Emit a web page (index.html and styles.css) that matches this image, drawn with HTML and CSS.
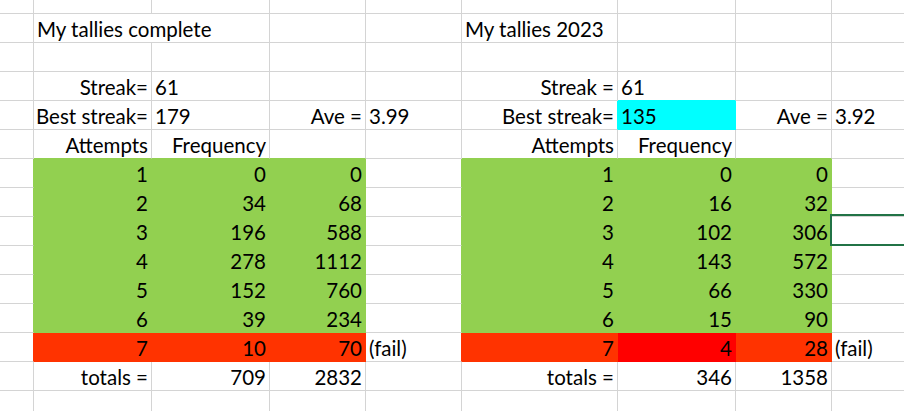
FILE: index.html
```html
<!DOCTYPE html>
<html>
<head>
<meta charset="utf-8">
<link rel="stylesheet" href="styles.css">
</head>
<body>
<div class="sheet">
  <!-- row 0 -->
  <div class="c"></div><div class="c"></div><div class="c"></div><div class="c"></div><div class="c"></div><div class="c"></div><div class="c"></div><div class="c"></div><div class="c"></div>
  <!-- row 1 title -->
  <div class="c"></div><div class="c span2">My tallies complete</div><div class="c"></div><div class="c"></div><div class="c">My tallies 2023</div><div class="c"></div><div class="c"></div><div class="c"></div>
  <!-- row 2 -->
  <div class="c"></div><div class="c"></div><div class="c"></div><div class="c"></div><div class="c"></div><div class="c"></div><div class="c"></div><div class="c"></div><div class="c"></div>
  <!-- row 3 streak -->
  <div class="c"></div><div class="c r">Streak=</div><div class="c">61</div><div class="c"></div><div class="c"></div><div class="c r">Streak =</div><div class="c cy-b">61</div><div class="c"></div><div class="c"></div>
  <!-- row 4 best streak -->
  <div class="c"></div><div class="c r">Best streak=</div><div class="c">179</div><div class="c r">Ave =</div><div class="c">3.99</div><div class="c r cy-r">Best streak=</div><div class="c cy">135</div><div class="c r">Ave =</div><div class="c">3.92</div>
  <!-- row 5 headers -->
  <div class="c"></div><div class="c r g-b">Attempts</div><div class="c r g-b">Frequency</div><div class="c g-b"></div><div class="c"></div><div class="c r g-b">Attempts</div><div class="c r g-b">Frequency</div><div class="c g-b"></div><div class="c"></div>
  <!-- rows 6-11 green -->
  <div class="c g-r"></div><div class="c r g">1</div><div class="c r g">0</div><div class="c r g">0</div><div class="c g-r"></div><div class="c r g">1</div><div class="c r g">0</div><div class="c r g">0</div><div class="c"></div>
  <div class="c g-r"></div><div class="c r g">2</div><div class="c r g">34</div><div class="c r g">68</div><div class="c g-r"></div><div class="c r g">2</div><div class="c r g">16</div><div class="c r g">32</div><div class="c"></div>
  <div class="c g-r"></div><div class="c r g">3</div><div class="c r g">196</div><div class="c r g">588</div><div class="c g-r"></div><div class="c r g">3</div><div class="c r g">102</div><div class="c r g">306</div><div class="c"></div>
  <div class="c g-r"></div><div class="c r g">4</div><div class="c r g">278</div><div class="c r g">1112</div><div class="c g-r"></div><div class="c r g">4</div><div class="c r g">143</div><div class="c r g">572</div><div class="c"></div>
  <div class="c g-r"></div><div class="c r g">5</div><div class="c r g">152</div><div class="c r g">760</div><div class="c g-r"></div><div class="c r g">5</div><div class="c r g">66</div><div class="c r g">330</div><div class="c"></div>
  <div class="c g-r"></div><div class="c r g">6</div><div class="c r g">39</div><div class="c r g">234</div><div class="c g-r"></div><div class="c r g">6</div><div class="c r g">15</div><div class="c r g">90</div><div class="c"></div>
  <!-- row 12 fail -->
  <div class="c o-r"></div><div class="c r o">7</div><div class="c r o">10</div><div class="c r o">70</div><div class="c o-r">(fail)</div><div class="c r o">7</div><div class="c r rd">4</div><div class="c r o">28</div><div class="c">(fail)</div>
  <!-- row 13 totals -->
  <div class="c"></div><div class="c r">totals =</div><div class="c r">709</div><div class="c r">2832</div><div class="c"></div><div class="c r">totals =</div><div class="c r">346</div><div class="c r">1358</div><div class="c"></div>
  <!-- row 14 -->
  <div class="c"></div><div class="c"></div><div class="c"></div><div class="c"></div><div class="c"></div><div class="c"></div><div class="c"></div><div class="c"></div><div class="c"></div>

  <div class="selection"></div>
</div>
</body>
</html>
```

FILE: styles.css
```css
html, body {
  margin: 0;
  padding: 0;
  background: #ffffff;
  overflow: hidden;
}

.sheet {
  position: relative;
  display: grid;
  grid-template-columns: 34px 118px 118px 96px 96px 156px 118px 96px 100px;
  grid-template-rows: 14px repeat(14, 29px);
  font-family: "Lato", "Liberation Sans", sans-serif;
  font-size: 20.5px;
  color: #000000;
  width: 904px;
  height: 411px;
  overflow: hidden;
}

.c {
  box-sizing: border-box;
  border-right: 1px solid #d4d4d4;
  border-bottom: 1px solid #d4d4d4;
  display: flex;
  align-items: flex-end;
  justify-content: flex-start;
  padding: 0 3px 3px 3px;
  line-height: 20px;
  white-space: nowrap;
  overflow: visible;
}

.r { justify-content: flex-end; }

.span2 { grid-column: span 2; }

.g { background: #92d050; border-color: #92d050; }
.o { background: #ff3300; border-color: #ff3300; }
.rd { background: #ff0000; border-color: #ff0000; }
.cy { background: #00ffff; border-color: #00ffff; }

.g-b { border-bottom-color: #92d050; }
.g-r { border-right-color: #92d050; }
.o-r { border-right-color: #ff3300; }
.cy-b { border-bottom-color: #00ffff; }
.cy-r { border-right-color: #00ffff; }

.selection {
  position: absolute;
  left: 830px;
  top: 214px;
  width: 90px;
  height: 32px;
  box-sizing: border-box;
  border: 2px solid #217346;
}
```
